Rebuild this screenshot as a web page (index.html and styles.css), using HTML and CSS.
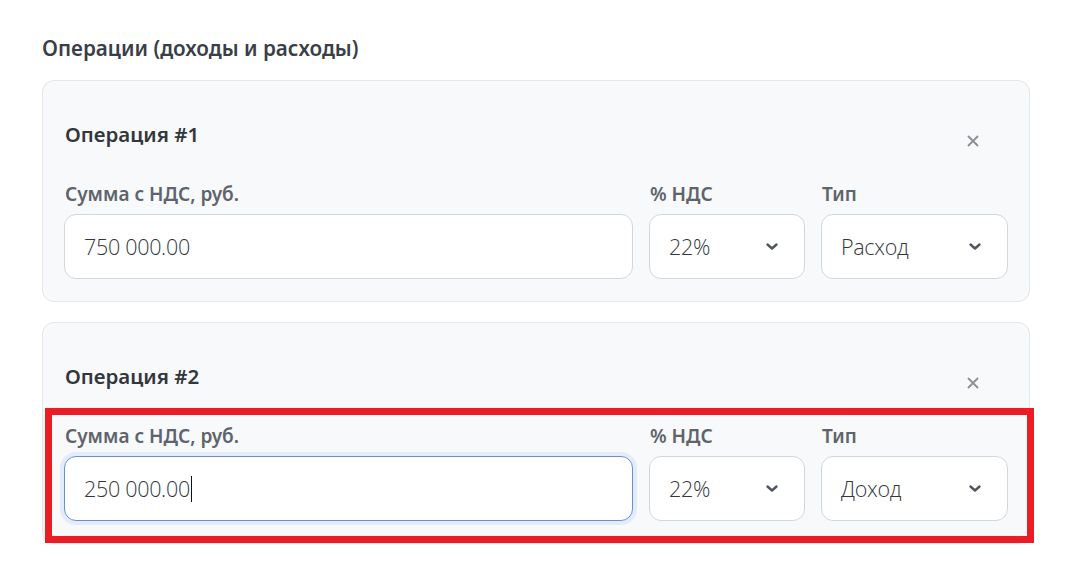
FILE: index.html
```html
<!DOCTYPE html>
<html lang="ru">
<head>
<meta charset="utf-8">
<title>Операции</title>
<link rel="stylesheet" href="styles.css">
</head>
<body>
<main class="page">
  <h2 class="section-title">Операции (доходы и расходы)</h2>
  <div class="ops">
    <section class="op-card">
      <div class="op-head">
        <h3 class="op-title">Операция #1</h3>
        <button class="op-remove" aria-label="Удалить">
          <svg width="12" height="12" viewBox="0 0 12 12"><path d="M1.5 1.5 L10.5 10.5 M10.5 1.5 L1.5 10.5" stroke="currentColor" stroke-width="1.9" stroke-linecap="round"/></svg>
        </button>
      </div>
      <div class="op-grid">
        <div class="op-field">
          <label class="op-label">Сумма с НДС, руб.</label>
          <div class="field"><span class="field-text">750 000.00</span></div>
        </div>
        <div class="op-field">
          <label class="op-label">% НДС</label>
          <div class="field field--select"><span class="field-text">22%</span>
            <svg class="chev" width="14" height="9" viewBox="0 0 14 9"><path d="M2.5 2.5 L7 6.5 L11.5 2.5" fill="none" stroke="currentColor" stroke-width="2.4" stroke-linecap="round" stroke-linejoin="round"/></svg>
          </div>
        </div>
        <div class="op-field">
          <label class="op-label">Тип</label>
          <div class="field field--select"><span class="field-text">Расход</span>
            <svg class="chev" width="14" height="9" viewBox="0 0 14 9"><path d="M2.5 2.5 L7 6.5 L11.5 2.5" fill="none" stroke="currentColor" stroke-width="2.4" stroke-linecap="round" stroke-linejoin="round"/></svg>
          </div>
        </div>
      </div>
    </section>

    <section class="op-card op-card--marked">
      <div class="op-head">
        <h3 class="op-title">Операция #2</h3>
        <button class="op-remove" aria-label="Удалить">
          <svg width="12" height="12" viewBox="0 0 12 12"><path d="M1.5 1.5 L10.5 10.5 M10.5 1.5 L1.5 10.5" stroke="currentColor" stroke-width="1.9" stroke-linecap="round"/></svg>
        </button>
      </div>
      <div class="op-grid">
        <div class="op-field">
          <label class="op-label">Сумма с НДС, руб.</label>
          <div class="field field--focus"><span class="field-text">250 000.00</span><span class="caret"></span></div>
        </div>
        <div class="op-field">
          <label class="op-label">% НДС</label>
          <div class="field field--select"><span class="field-text">22%</span>
            <svg class="chev" width="14" height="9" viewBox="0 0 14 9"><path d="M2.5 2.5 L7 6.5 L11.5 2.5" fill="none" stroke="currentColor" stroke-width="2.4" stroke-linecap="round" stroke-linejoin="round"/></svg>
          </div>
        </div>
        <div class="op-field">
          <label class="op-label">Тип</label>
          <div class="field field--select"><span class="field-text">Доход</span>
            <svg class="chev" width="14" height="9" viewBox="0 0 14 9"><path d="M2.5 2.5 L7 6.5 L11.5 2.5" fill="none" stroke="currentColor" stroke-width="2.4" stroke-linecap="round" stroke-linejoin="round"/></svg>
          </div>
        </div>
      </div>
      <div class="highlight"></div>
    </section>
  </div>
</main>
</body>
</html>
```

FILE: styles.css
```css
* { box-sizing: border-box; }

html, body {
  margin: 0;
  padding: 0;
  background: #ffffff;
}

body {
  font-family: "Noto Sans", "Open Sans", "DejaVu Sans", sans-serif;
  color: #3a3f47;
}

.page {
  padding: 34px 43px 0 42px;
  width: 1073px;
}

.section-title {
  margin: 0 0 18px 0;
  font-size: 20.7px;
  line-height: 28px;
  font-weight: 600;
  color: #3a3f47;
}

.ops {
  display: flex;
  flex-direction: column;
  gap: 20px;
}

.op-card {
  position: relative;
  background: #f8f9fa;
  border: 1px solid #e3e6ea;
  border-radius: 12px;
  padding: 0 21px 22px 21px;
}

.op-head {
  display: flex;
  justify-content: space-between;
  align-items: flex-start;
  height: 101px;
}

.op-title {
  margin: 39px 0 0 1px;
  font-size: 20.5px;
  line-height: 28px;
  font-weight: 600;
  color: #33373d;
}

.op-remove {
  margin: 44px 19px 0 0;
  width: 32px;
  height: 32px;
  padding: 0;
  border: none;
  background: transparent;
  color: #8c9198;
  display: flex;
  align-items: center;
  justify-content: center;
  cursor: pointer;
}

.op-grid {
  display: grid;
  grid-template-columns: 1fr 156px 187px;
  gap: 16px;
}

.op-field {
  display: flex;
  flex-direction: column;
}

.op-label {
  font-size: 19px;
  line-height: 24px;
  font-weight: 600;
  color: #5e646c;
  margin: 0 0 8px 1px;
}

.field {
  position: relative;
  height: 65px;
  background: #ffffff;
  border: 1px solid #d3d7dc;
  border-radius: 12px;
  padding: 0 19px;
  display: flex;
  align-items: center;
}

.field-text {
  font-family: "Open Sans", "Noto Sans", sans-serif;
  font-size: 21.5px;
  font-weight: 300;
  color: #33373d;
  letter-spacing: -0.3px;
}

.field--focus {
  border-color: #6b8fd0;
  box-shadow: 0 0 0 4px #e4ecf9;
}

.caret {
  display: inline-block;
  width: 1.5px;
  height: 26px;
  background: #111111;
  margin-left: 1px;
}

.field--select {
  justify-content: space-between;
  padding-right: 25px;
}

.chev {
  color: #50565e;
}

.highlight {
  position: absolute;
  top: 85px;
  left: 2px;
  right: -5px;
  bottom: 0;
  border: 7px solid #ec1c24;
  pointer-events: none;
}
```
